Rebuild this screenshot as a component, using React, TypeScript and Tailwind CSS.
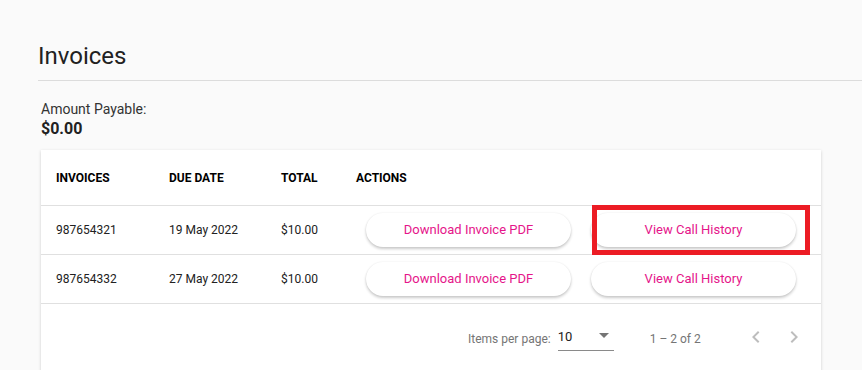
import React from 'react'

interface Invoice {
  id: string
  due: string
  total: string
}

const invoices: Invoice[] = [
  { id: '987654321', due: '19 May 2022', total: '$10.00' },
  { id: '987654332', due: '27 May 2022', total: '$10.00' },
]

export default function App() {
  return (
    <div className="min-h-[370px] h-[370px] w-full bg-[#fafafa] overflow-hidden" style={{ fontFamily: 'Roboto, "Liberation Sans", sans-serif' }}>
      <div className="pl-[38px] pt-[40px]">
        {/* Header */}
        <h1 className="text-[24px] leading-[32px] text-[#212121] font-normal">Invoices</h1>
        <div className="mt-[8px] h-px bg-[#dcdcdc]" />

        <div className="ml-[3px] mt-[19px]">
          <p className="text-[14px] leading-[18px] text-[#333]">Amount Payable:</p>
          <p className="text-[16px] leading-[21px] font-bold text-[#212121]">$0.00</p>
        </div>

        {/* Table card */}
        <div className="ml-[3px] mt-[11px] w-[780px] bg-white shadow-[0_1px_3px_rgba(0,0,0,0.18)]">
          <div className="flex items-center h-[56px] border-b border-[#e0e0e0] text-[12px] font-bold text-black">
            <div className="w-[128px] pl-[15px]">INVOICES</div>
            <div className="w-[112px]">DUE DATE</div>
            <div className="w-[75px]">TOTAL</div>
            <div>ACTIONS</div>
          </div>
          {invoices.map((inv, i) => (
            <div key={inv.id} className="relative flex items-center h-[49px] border-b border-[#e0e0e0] text-[12px] text-[#212121]">
              <div className="w-[128px] pl-[15px]">{inv.id}</div>
              <div className="w-[112px]">{inv.due}</div>
              <div className="w-[75px]">{inv.total}</div>
              <div className="flex gap-[20px] pl-[10px]">
                <ActionButton label="Download Invoice PDF" />
                <ActionButton label="View Call History" />
              </div>
              {i === 0 && (
                <div className="absolute left-[551px] top-[-1px] w-[218px] h-[50px] border-[5px] border-[#ec1c24]" />
              )}
            </div>
          ))}

          {/* Paginator */}
          <div className="flex items-start pt-[23px] h-[80px] text-[12px] text-[#757575]">
            <span className="ml-[427px] mt-[3px]">Items per page:</span>
            <div className="ml-[7px] w-[56px] h-[24px] border-b border-[#8a8a8a] flex items-start justify-between">
              <span className="text-[13px] text-[#212121]">10</span>
              <svg width="10" height="5" viewBox="0 0 10 5" className="mt-[6px] mr-[5px]">
                <path d="M0 0 L10 0 L5 5 Z" fill="#757575" />
              </svg>
            </div>
            <span className="ml-[36px] mt-[3px]">1 – 2 of 2</span>
            <svg width="24" height="24" viewBox="0 0 24 24" className="ml-[43px] -mt-[2px]">
              <path d="M15.4 7.4 L14 6 L8 12 L14 18 L15.4 16.6 L10.8 12 Z" fill="#bdbdbd" />
            </svg>
            <svg width="24" height="24" viewBox="0 0 24 24" className="ml-[14px] -mt-[2px]">
              <path d="M8.6 16.6 L10 18 L16 12 L10 6 L8.6 7.4 L13.2 12 Z" fill="#bdbdbd" />
            </svg>
          </div>
        </div>
      </div>
    </div>
  )
}

function ActionButton({ label }: { label: string }) {
  return (
    <button className="w-[205px] h-[34px] rounded-full bg-white text-[13px] text-[#e5158a] shadow-[0_2px_3px_rgba(0,0,0,0.2),0_0_2px_rgba(0,0,0,0.08)]">
      {label}
    </button>
  )
}
